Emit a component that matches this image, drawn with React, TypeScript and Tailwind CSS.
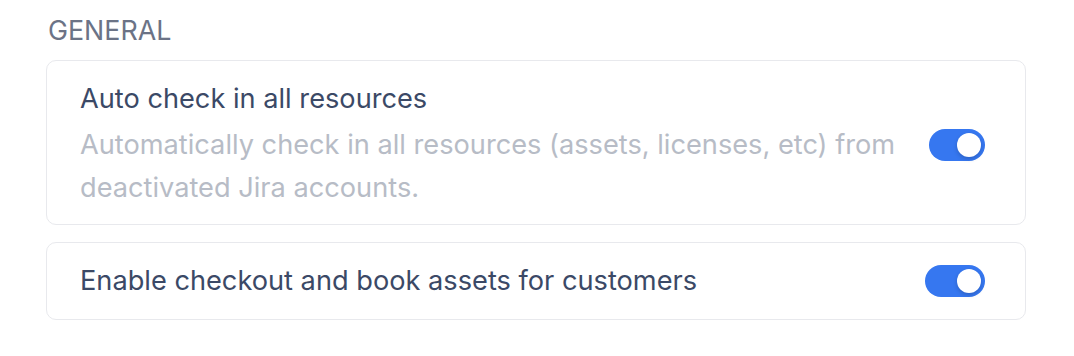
import React, { useState } from 'react';

interface ToggleProps {
  checked: boolean;
  onChange: (v: boolean) => void;
  width: string;
}

const Toggle: React.FC<ToggleProps> = ({ checked, onChange, width }) => (
  <button
    type="button"
    role="switch"
    aria-checked={checked}
    onClick={() => onChange(!checked)}
    className={`relative shrink-0 h-[32px] ${width} rounded-full transition-colors ${checked ? 'bg-[#3677f0]' : 'bg-gray-300'}`}
  >
    <span
      className={`absolute top-[4px] h-[24px] w-[24px] rounded-full bg-white shadow-[0_2px_4px_rgba(0,0,0,0.18)] transition-all ${checked ? 'right-[4px]' : 'left-[4px]'}`}
    />
  </button>
);

export default function App() {
  const [autoCheckIn, setAutoCheckIn] = useState(true);
  const [checkout, setCheckout] = useState(true);

  return (
    <div className="w-[1074px] h-[356px] bg-white pl-[46px] pr-[48px] pt-[14px]" style={{ fontFamily: 'Inter, "Noto Sans", sans-serif' }}>
      <h3 className="pl-[2px] text-[26.8px] leading-[32px] text-[#6b7386]">GENERAL</h3>

      <div className="mt-[14px] flex flex-col gap-[17px]">
        <div className="flex items-center justify-between gap-8 rounded-[10px] border border-[#e8e9ed] bg-white pl-[33px] pr-[40px] pt-[19px] pb-[15px]">
          <div>
            <div className="text-[27.2px] leading-[38px] text-[#3b4966]">Auto check in all resources</div>
            <div className="mt-[5px] text-[27.2px] leading-[43px] text-[#b7bcc6]">
              Automatically check in all resources (assets, licenses, etc) from
              <br />
              deactivated Jira accounts.
            </div>
          </div>
          <Toggle checked={autoCheckIn} onChange={setAutoCheckIn} width="w-[56px]" />
        </div>

        <div className="flex items-center justify-between rounded-[10px] border border-[#e8e9ed] bg-white pl-[33px] pr-[40px] py-[19px]">
          <div className="text-[27.2px] leading-[38px] text-[#3b4966]">Enable checkout and book assets for customers</div>
          <Toggle checked={checkout} onChange={setCheckout} width="w-[60px]" />
        </div>
      </div>
    </div>
  );
}
